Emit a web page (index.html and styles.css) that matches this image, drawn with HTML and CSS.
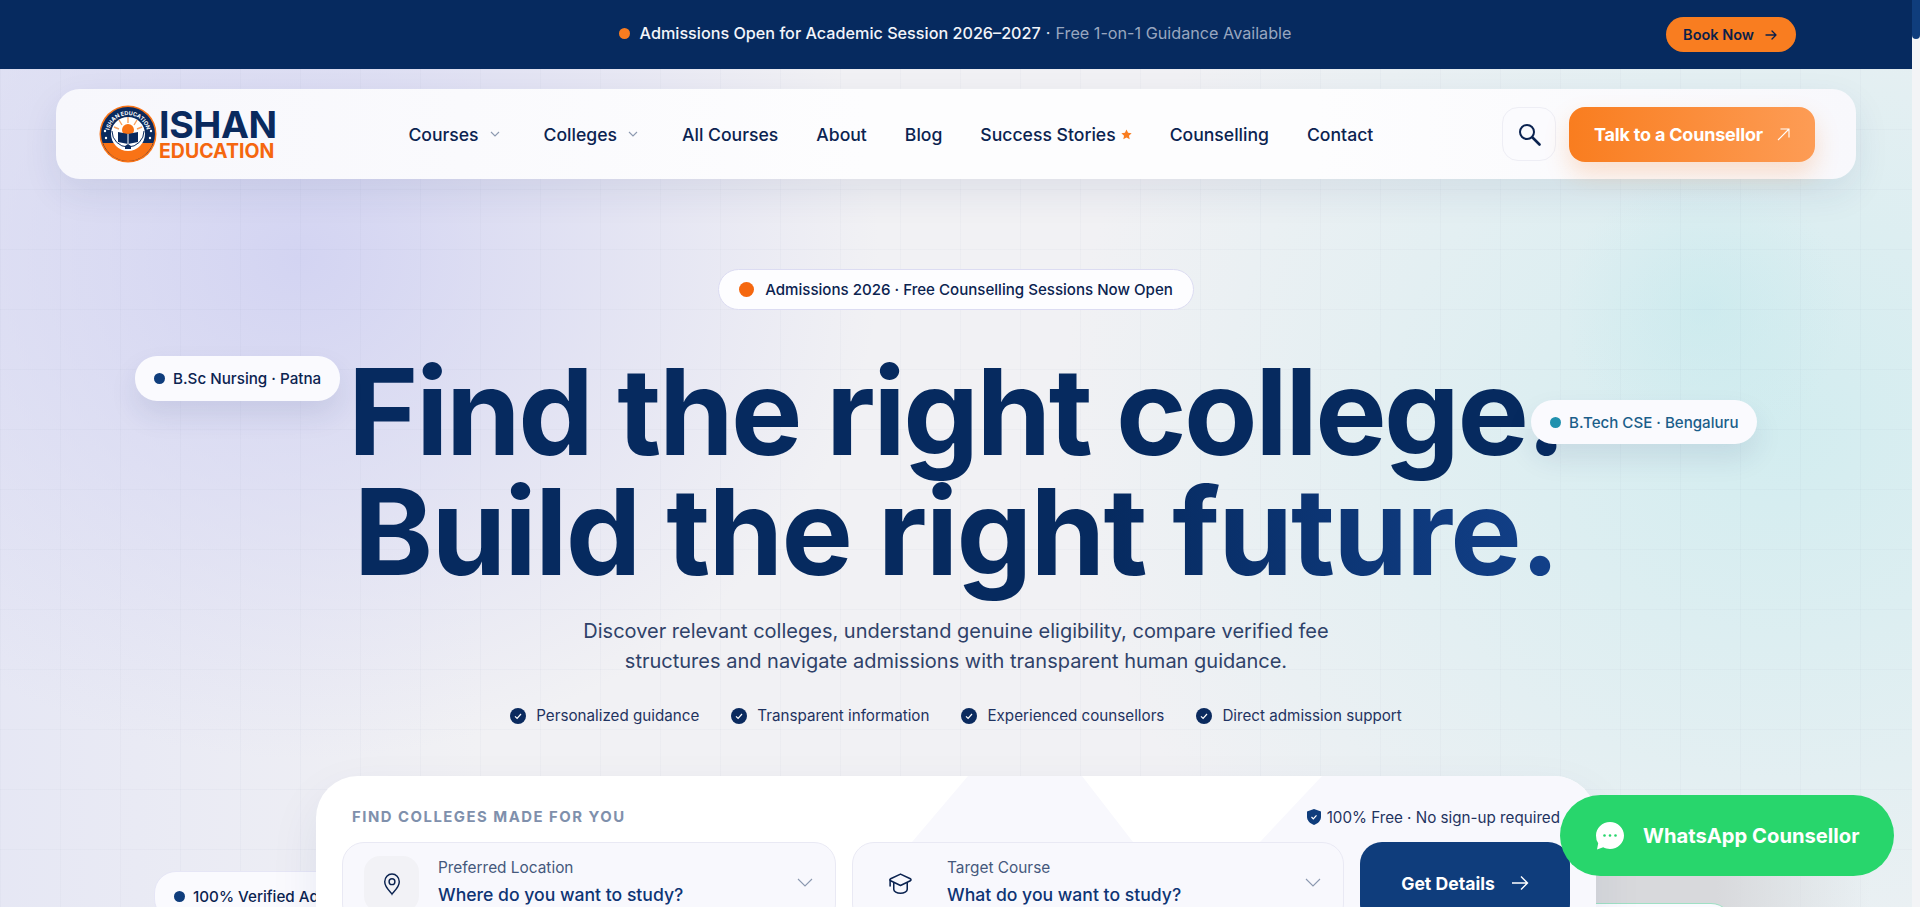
FILE: index.html
```html
<!doctype html>
<html lang="en">
  <head>
    <meta charset="UTF-8" />
    <meta name="viewport" content="width=device-width, initial-scale=1" />
    <title>Ishan Education</title>
    <link rel="stylesheet" href="styles.css">
  </head>

  <body>
    <div class="page">
      <div class="topbar">
        <span></span>
        <p class="topbar-text">
          <i class="topbar-dot"></i>
          <strong>Admissions Open for Academic Session 2026–2027</strong>
          <span class="topbar-sep">·</span>
          <span class="topbar-muted">Free 1-on-1 Guidance Available</span>
        </p>
        <a class="book-btn" href="#">Book Now
          <svg width="14" height="14" viewBox="0 0 14 14" fill="none" stroke="currentColor" stroke-width="1.3" stroke-linecap="round" stroke-linejoin="round"><path d="M2 7h10M8 3l4 4-4 4"/></svg>
        </a>
      </div>

      <div class="hero">
        <header class="navbar">
          <a class="logo" href="#">
            <svg class="logo-mark" viewBox="0 0 58 58">
              <defs><path id="arc" d="M10 29a19 19 0 0 1 38 0"/></defs>
              <circle cx="29" cy="29" r="28.5" fill="#f97316"/>
              <circle cx="29" cy="29" r="27" fill="#0a2a5e"/>
              <path d="M4 38h50c-4 11-14 18-25 18S8 49 4 38z" fill="#f97316"/>
              <circle cx="29" cy="29" r="17" fill="#fff"/>
              <circle cx="29" cy="25" r="6" fill="#f97316"/>
              <path d="M29 12v6M20 15l3 5M38 15l-3 5M15 22l5 2M43 22l-5 2" stroke="#f9a15e" stroke-width="1.4"/>
              <path d="M19 27l10 2 10-2v10l-10 2-10-2z" fill="#0a2a5e"/>
              <path d="M29 29v10" stroke="#fff" stroke-width="1"/>
              <path d="M26 44v-3l3-2 3 2v3z" fill="#0a2a5e"/>
              <path d="M13 26a16 16 0 0 0 32 0" fill="none" stroke="#0a2a5e" stroke-width="1"/>
              <text class="logo-arc"><textPath href="#arc" startOffset="50%" text-anchor="middle">ISHAN EDUCATION</textPath></text>
              <circle cx="6" cy="26" r="1.2" fill="#fff"/><circle cx="52" cy="26" r="1.2" fill="#fff"/>
              <circle cx="7" cy="33" r="1.2" fill="#fff"/><circle cx="51" cy="33" r="1.2" fill="#fff"/>
            </svg>
            <span class="logo-words">
              <b class="logo-top">ISHAN</b>
              <b class="logo-bottom">EDUCATION</b>
            </span>
          </a>

          <nav class="nav-links">
            <a href="#" class="has-caret">Courses
              <svg width="10" height="6" viewBox="0 0 10 6" fill="none" stroke="#8c99b0" stroke-width="1.1"><path d="M1 1l4 4 4-4"/></svg>
            </a>
            <a href="#" class="has-caret">Colleges
              <svg width="10" height="6" viewBox="0 0 10 6" fill="none" stroke="#8c99b0" stroke-width="1.1"><path d="M1 1l4 4 4-4"/></svg>
            </a>
            <a href="#">All Courses</a>
            <a href="#">About</a>
            <a href="#">Blog</a>
            <a href="#" class="has-star">Success Stories
              <svg width="11" height="11" viewBox="0 0 12 12" fill="#f97d20"><path d="M6 .6l1.7 3.6 3.9.5-2.9 2.7.8 3.9L6 9.4l-3.5 1.9.8-3.900L.4 4.700l3.900-.5z"/></svg>
            </a>
            <a href="#">Counselling</a>
            <a href="#">Contact</a>
          </nav>

          <div class="nav-actions">
            <button class="search-btn" aria-label="Search">
              <svg width="24" height="24" viewBox="0 0 24 24" fill="none" stroke="#0b2350" stroke-width="2" stroke-linecap="round"><circle cx="10" cy="10" r="7"/><path d="M15.500 15.500l7 7" stroke-width="2.600"/></svg>
            </button>
            <a class="cta-btn" href="#">Talk to a Counsellor
              <svg width="13" height="13" viewBox="0 0 13 13" fill="none" stroke="#fff" stroke-width="1.100"><path d="M1 12L12 1M3.500 1H12v8.500"/></svg>
            </a>
          </div>
        </header>

        <section class="hero-main">
          <div class="float-pill pill-left"><i class="dot dot-navy"></i>B.Sc Nursing · Patna</div>
          <div class="float-pill pill-right"><i class="dot dot-teal"></i>B.Tech CSE · Bengaluru</div>
          <div class="float-pill pill-verified"><i class="dot dot-navy"></i>100% Verified Admissions</div>
          <div class="float-pill pill-green"></div>
          <div class="wa-shade"></div>

          <div class="badge"><i class="badge-dot"></i>Admissions 2026 · Free Counselling Sessions Now Open</div>

          <h1 class="headline">Find the right college.<br><span class="headline-accent">Build the right future.</span></h1>

          <p class="lede">Discover relevant colleges, understand genuine eligibility, compare verified fee<br>structures and navigate admissions with transparent human guidance.</p>

          <ul class="checks">
            <li><svg width="16" height="16" viewBox="0 0 16 16"><circle cx="8" cy="8" r="8" fill="#0a2a5e"/><path d="M5 8.300l2.100 2.100L11 6" fill="none" stroke="#fff" stroke-width="1.200"/></svg>Personalized guidance</li>
            <li><svg width="16" height="16" viewBox="0 0 16 16"><circle cx="8" cy="8" r="8" fill="#0a2a5e"/><path d="M5 8.300l2.100 2.100L11 6" fill="none" stroke="#fff" stroke-width="1.200"/></svg>Transparent information</li>
            <li><svg width="16" height="16" viewBox="0 0 16 16"><circle cx="8" cy="8" r="8" fill="#0a2a5e"/><path d="M5 8.300l2.100 2.100L11 6" fill="none" stroke="#fff" stroke-width="1.200"/></svg>Experienced counsellors</li>
            <li><svg width="16" height="16" viewBox="0 0 16 16"><circle cx="8" cy="8" r="8" fill="#0a2a5e"/><path d="M5 8.300l2.100 2.100L11 6" fill="none" stroke="#fff" stroke-width="1.200"/></svg>Direct admission support</li>
          </ul>

          <div class="finder">
            <svg class="finder-shapes" viewBox="0 0 1280 160" preserveAspectRatio="none">
              <path d="M652 0h114l51 66H596z"/>
              <path d="M1006 0h274v160H900l44-94z"/>
            </svg>
            <div class="finder-head">
              <span class="finder-title">FIND COLLEGES MADE FOR YOU</span>
              <span class="finder-note">
                <svg width="14" height="16" viewBox="0 0 14 16"><path d="M7 0l7 2.400v5.400c0 3.700-2.800 6.700-7 8.200-4.200-1.500-7-4.500-7-8.200V2.400z" fill="#0f3d7c"/><path d="M4.500 8l1.800 1.800L9.500 6.300" fill="none" stroke="#fff" stroke-width="1.200"/></svg>
                100% Free · No sign-up required
              </span>
            </div>
            <div class="finder-row">
              <div class="field">
                <span class="field-icon">
                  <svg width="20" height="24" viewBox="0 0 22 26" fill="none" stroke="#0b2350" stroke-width="1.600"><path d="M11 24c-1-2-8-7-8-13.500C3 5.800 6.600 2 11 2s8 3.800 8 8.500C19 17 12 22 11 24z"/><circle cx="11" cy="10.500" r="3.200"/></svg>
                </span>
                <span class="field-text">
                  <span class="field-label">Preferred Location</span>
                  <span class="field-value">Where do you want to study?</span>
                </span>
                <svg class="field-caret" width="16" height="9" viewBox="0 0 16 9" fill="none" stroke="#8c99b0" stroke-width="1.100"><path d="M1 1l7 7 7-7"/></svg>
              </div>
              <div class="field">
                <span class="field-icon field-icon-plain">
                  <svg width="27" height="27" viewBox="0 0 26 26" fill="none" stroke="#0b2350" stroke-width="1.500" stroke-linejoin="round" stroke-linecap="round"><path d="M13 3l9.500 4.500c.8.400.8 1.500 0 1.900L13 14 3.500 9.400c-.8-.4-.8-1.500 0-1.900z"/><path d="M6.500 11.500v6c0 2.200 3 4 6.500 4s6.500-1.800 6.500-4v-6"/><path d="M3 8.500v6"/></svg>
                </span>
                <span class="field-text">
                  <span class="field-label">Target Course</span>
                  <span class="field-value">What do you want to study?</span>
                </span>
                <svg class="field-caret" width="16" height="9" viewBox="0 0 16 9" fill="none" stroke="#8c99b0" stroke-width="1.100"><path d="M1 1l7 7 7-7"/></svg>
              </div>
              <button class="details-btn">Get Details
                <svg width="18" height="16" viewBox="0 0 18 16" fill="none" stroke="#fff" stroke-width="1.400"><path d="M1 8h15.500M10 1.500L16.500 8 10 14.500"/></svg>
              </button>
            </div>
          </div>
        </section>
      </div>
    </div>

    <div class="scroll-track"><div class="scroll-thumb"></div></div>

    <a class="whatsapp" href="#">
      <svg width="30" height="30" viewBox="0 0 30 30"><path d="M15 1c7.700 0 14 6 14 13.500S22.700 28 15 28c-2.500 0-4.800-.6-6.800-1.700L2 28.500l1.200-6.200A13.200 13.200 0 0 1 1 14.500C1 7 7.300 1 15 1z" fill="#fff"/><circle cx="9.500" cy="14.500" r="1.300" fill="#28d66c"/><circle cx="15" cy="14.500" r="1.300" fill="#28d66c"/><circle cx="20.500" cy="14.500" r="1.300" fill="#28d66c"/></svg>
      WhatsApp Counsellor
    </a>
  </body>
</html>
```

FILE: styles.css
```css
* {
  box-sizing: border-box;
}

html,
body {
  margin: 0;
  height: 100%;
  overflow: hidden;
}

body {
  display: flex;
  font-family: Inter, "Liberation Sans", sans-serif;
  color: #0b2350;
  background: #fff;
}

a {
  color: inherit;
  text-decoration: none;
}

.page {
  flex: 1;
  min-width: 0;
  height: 100vh;
  overflow: hidden;
  display: flex;
  flex-direction: column;
}

.scroll-track {
  width: 8px;
  background: #f3f4f6;
}

.scroll-thumb {
  height: 39px;
  background: #0f3d7c;
  border-radius: 0 0 4px 4px;
}

/* announcement strip */
.topbar {
  flex: none;
  height: 69px;
  padding: 0 116px 0 114px;
  display: grid;
  grid-template-columns: 1fr auto 1fr;
  align-items: center;
  background: #062a5f;
}

.topbar-text {
  margin: 0 0 3px;
  display: flex;
  align-items: center;
  font-size: 16.2px;
  color: #98a6bf;
}

.topbar-text strong {
  font-weight: 500;
  color: #f3f5fa;
}

.topbar-dot {
  width: 11px;
  height: 11px;
  margin-right: 10px;
  border-radius: 50%;
  background: #f97d20;
}

.topbar-sep {
  margin: 0 5px;
  color: #dfe4ee;
}

.book-btn {
  justify-self: end;
  display: flex;
  align-items: center;
  gap: 10px;
  height: 35px;
  padding: 0 18px 0 17px;
  border-radius: 18px;
  font-size: 14.5px;
  font-weight: 600;
  color: #0a1f4a;
  background: #f97d20;
}

/* hero */
.hero {
  flex: 1;
  position: relative;
  padding: 20px 56px 0;
  background-color: #f1f1f4;
  background-image:
    linear-gradient(rgba(40, 60, 120, 0.022) 1px, transparent 1px),
    linear-gradient(90deg, rgba(40, 60, 120, 0.022) 1px, transparent 1px),
    radial-gradient(circle at 1705px 240px, rgba(195, 232, 236, 0.5) 0, rgba(195, 232, 236, 0) 140px),
    radial-gradient(ellipse 580px 500px at 300px 190px, #d3d4f2 0, rgba(211, 212, 242, 0) 100%),
    radial-gradient(ellipse 720px 640px at 1780px 360px, rgba(207, 236, 239, 0.9) 0, rgba(207, 236, 239, 0) 100%),
    linear-gradient(90deg, rgba(225, 227, 244, 0.7), rgba(225, 227, 244, 0) 25%);
  background-size: 60px 60px, 60px 60px, auto, auto, auto, auto;
}

.navbar {
  height: 90px;
  padding: 0 41px 0 43px;
  display: flex;
  align-items: center;
  justify-content: space-between;
  border-radius: 24px;
  background: linear-gradient(90deg, #f7f7fc 0, #fdfdfe 45%, #fdfdfe 70%, #f8f8fc 100%);
  box-shadow: 0 14px 36px rgba(30, 50, 110, 0.09);
  position: relative;
  z-index: 3;
}

.logo {
  display: flex;
  align-items: center;
  gap: 2px;
}

.logo-mark {
  width: 58px;
  height: 58px;
}

.logo-arc {
  font-size: 5.5px;
  font-weight: 700;
  fill: #fff;
}

.logo-words {
  display: flex;
  flex-direction: column;
  padding-top: 2px;
}

.logo-top {
  font-size: 37.5px;
  line-height: 32px;
  font-weight: 700;
  letter-spacing: -0.4px;
  color: #0a2a5e;
}

.logo-bottom {
  font-size: 19.5px;
  line-height: 20px;
  font-weight: 700;
  color: #f5670f;
}

.nav-links {
  display: flex;
  align-items: center;
  gap: 38px;
  margin-left: 3px;
  font-size: 17.6px;
  font-weight: 500;
}

.has-caret {
  display: flex;
  align-items: center;
  gap: 11px;
  margin-right: 6px;
}

.has-star {
  display: flex;
  align-items: center;
  gap: 5px;
}

.nav-actions {
  display: flex;
  align-items: center;
  gap: 13px;
}

.search-btn {
  width: 54px;
  height: 54px;
  padding: 0;
  display: flex;
  align-items: center;
  justify-content: center;
  border: 1px solid #eeeef5;
  border-radius: 16px;
  background: #fbfbfe;
}

.cta-btn {
  width: 246px;
  height: 55px;
  display: flex;
  align-items: center;
  justify-content: center;
  gap: 14px;
  border-radius: 16px;
  font-size: 18px;
  font-weight: 700;
  letter-spacing: -0.2px;
  color: #fff;
  background: linear-gradient(90deg, #f97d1f, #fd9c55);
  box-shadow: 0 12px 24px rgba(249, 125, 31, 0.22);
}

.hero-main {
  display: flex;
  flex-direction: column;
  align-items: center;
}

.badge {
  margin-top: 90px;
  height: 41px;
  padding: 0 20px;
  display: flex;
  align-items: center;
  gap: 11px;
  border: 1px solid #dcdcf2;
  border-radius: 21px;
  font-size: 15.1px;
  font-weight: 500;
  background: #fdfdff;
}

.badge-dot {
  width: 15px;
  height: 15px;
  border-radius: 50%;
  background: #f5670f;
}

.headline {
  margin: 42px 0 0;
  font-size: 120px;
  line-height: 120px;
  font-weight: 700;
  letter-spacing: -0.021em;
  text-align: center;
  color: #062a5f;
}

.headline-accent {
  letter-spacing: -0.015em;
  background: linear-gradient(90deg, #062a5f 0, #062a5f 62%, #124089 100%);
  -webkit-background-clip: text;
  background-clip: text;
  color: transparent;
}

.lede {
  margin: 24px 0 0;
  font-size: 20px;
  line-height: 30px;
  text-align: center;
  color: #2f4269;
}

.checks {
  margin: 28px 0 0;
  padding: 0;
  list-style: none;
  display: flex;
  gap: 32px;
  font-size: 15.2px;
  line-height: 24px;
  color: #1f3360;
}

.checks li {
  display: flex;
  align-items: center;
  gap: 10px;
}

.finder {
  position: relative;
  z-index: 2;
  width: 1280px;
  height: 220px;
  margin-top: 48px;
  padding: 21px 26px 26px;
  overflow: hidden;
  border-radius: 42px;
  background: #fff;
  box-shadow: 0 20px 50px rgba(30, 50, 110, 0.08);
}

.finder-shapes {
  position: absolute;
  top: 0;
  left: 0;
  width: 1280px;
  height: 160px;
  fill: #f8f8fd;
}

.finder-head {
  position: relative;
  height: 40px;
  margin-bottom: 5px;
  padding: 0 10px;
  display: flex;
  align-items: center;
  justify-content: space-between;
}

.finder-title {
  font-size: 14.9px;
  font-weight: 700;
  letter-spacing: 0.1em;
  color: #7f90ac;
}

.finder-note {
  display: flex;
  align-items: center;
  gap: 6px;
  font-size: 15.2px;
  color: #1f3360;
}

.finder-row {
  position: relative;
  display: grid;
  grid-template-columns: 494px 492px 210px;
  gap: 16px;
}

.field {
  height: 84px;
  padding: 13px 22px 13px 21px;
  display: flex;
  align-items: center;
  border: 1px solid #e9e9f4;
  border-radius: 22px;
  background: #f8f8fd;
}

.field-icon {
  flex: none;
  width: 55px;
  height: 56px;
  display: flex;
  align-items: center;
  justify-content: center;
  border-radius: 16px;
  background: #f2f2f6;
}

.field-icon-plain {
  margin-left: -1px;
  background: #f8f8fd;
}

.field-text {
  flex: 1;
  margin: -4px 0 0 19px;
  display: flex;
  flex-direction: column;
  gap: 5px;
}

.field-label {
  font-size: 15.4px;
  line-height: 20px;
  color: #45587c;
}

.field-value {
  font-size: 17.6px;
  line-height: 24px;
  font-weight: 500;
  color: #0e3474;
}

.field-caret {
  flex: none;
  margin-top: -4px;
}

.details-btn {
  height: 84px;
  padding-bottom: 3px;
  display: flex;
  align-items: center;
  justify-content: center;
  gap: 16px;
  border: 0;
  border-radius: 22px;
  font: 700 17.6px Inter, "Liberation Sans", sans-serif;
  color: #fff;
  background: #0f3d7c;
}

/* floating chips around the headline */
.float-pill {
  position: absolute;
  z-index: 1;
  display: flex;
  align-items: center;
  gap: 8px;
  font-size: 15.2px;
  font-weight: 500;
  white-space: nowrap;
  border-radius: 22px;
  background: #fafafe;
}

.pill-left {
  top: 287px;
  left: 135px;
  height: 45px;
  padding: 0 19px;
  box-shadow: 0 14px 28px rgba(30, 50, 110, 0.1);
}

.pill-right {
  top: 331px;
  left: 1531px;
  z-index: 2;
  height: 44px;
  padding: 0 19px;
  font-size: 15.1px;
  color: #1a5e8a;
  box-shadow: 0 14px 28px rgba(30, 50, 110, 0.1);
}

.pill-verified {
  top: 802px;
  left: 154px;
  height: 50px;
  padding: 0 19px;
  border: 1px solid #e6e6f6;
}

.pill-green {
  top: 834px;
  left: 1500px;
  width: 233px;
  height: 50px;
  border: 1px solid #9fe0c4;
}

.wa-shade {
  position: absolute;
  top: 800px;
  left: 1590px;
  width: 280px;
  height: 60px;
  background: linear-gradient(90deg, #d8d9dc 45%, rgba(216, 217, 220, 0) 100%);
}

.dot {
  width: 11px;
  height: 11px;
  border-radius: 50%;
}

.dot-navy {
  background: #0f3d7c;
}

.dot-teal {
  background: #2191ae;
}

.whatsapp {
  position: fixed;
  right: 26px;
  bottom: 31px;
  z-index: 5;
  width: 334px;
  height: 81px;
  padding-left: 35px;
  display: flex;
  align-items: center;
  gap: 18px;
  border-radius: 41px;
  font-size: 20.2px;
  font-weight: 700;
  color: #fff;
  background: #28d66c;
}
```
